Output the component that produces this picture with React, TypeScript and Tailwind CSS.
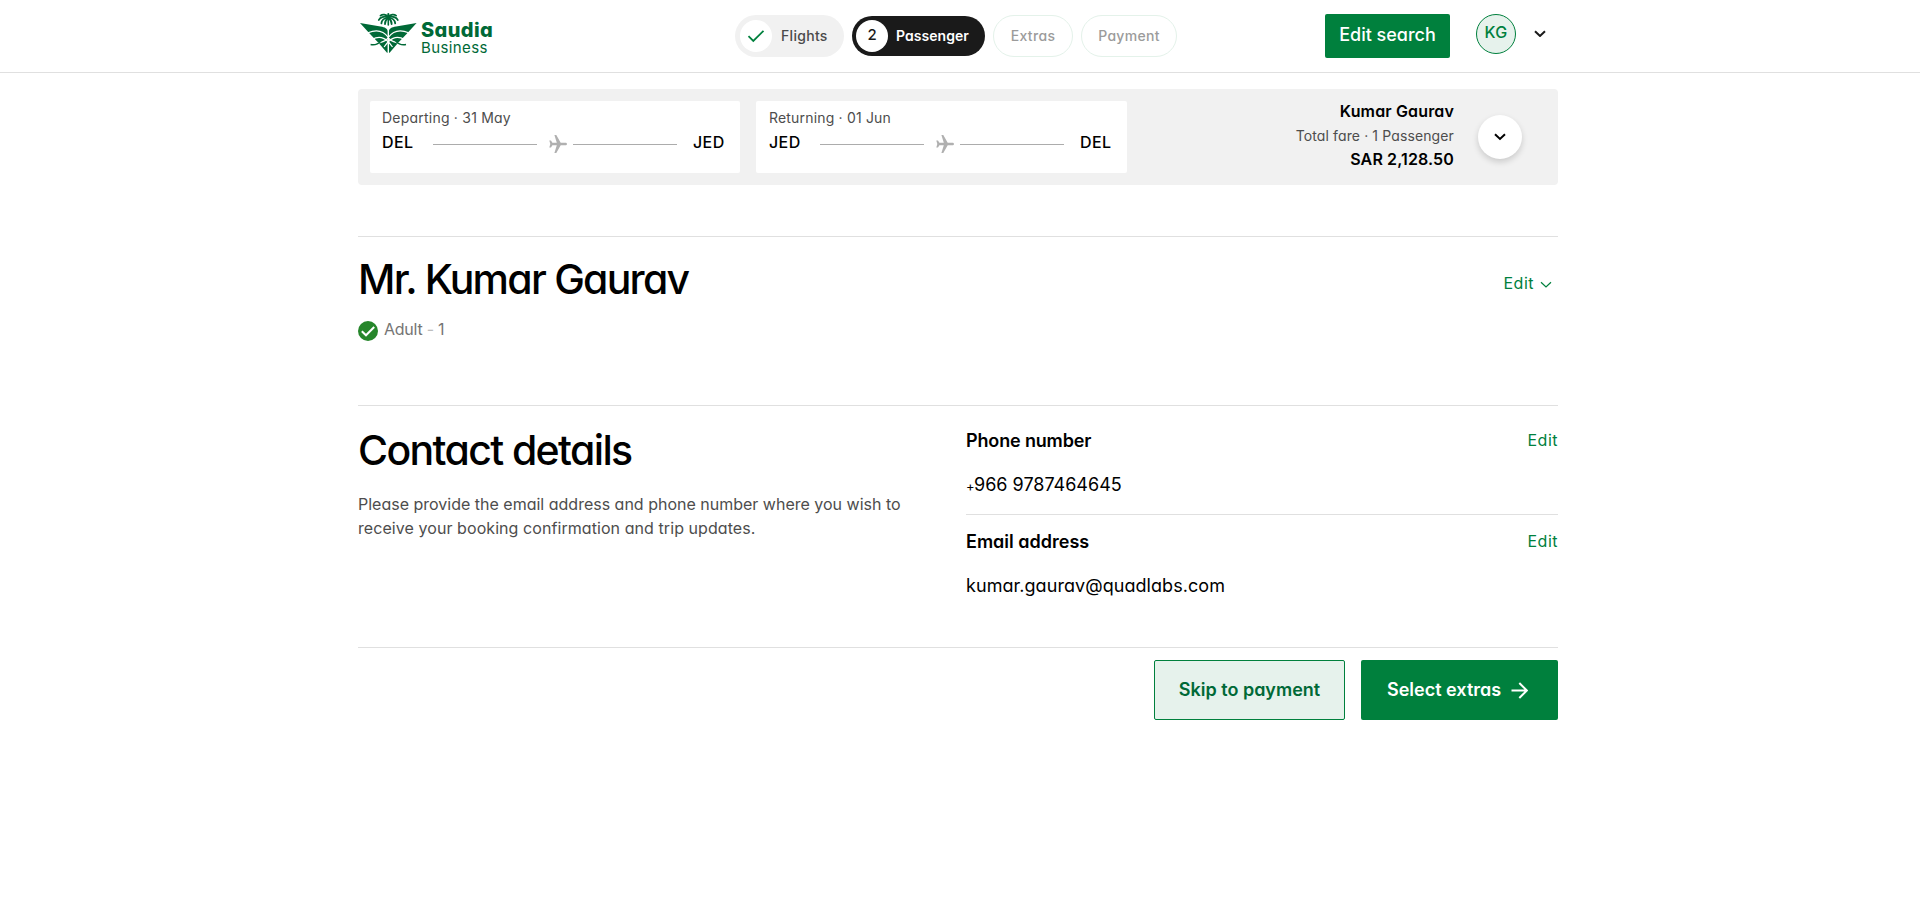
import React from "react";

function LogoMark() {
  return (
    <svg width="58" height="42" viewBox="0 0 58 42" className="block">
      <g stroke="#006937" strokeWidth="1.8" fill="none" strokeLinecap="round">
        <path d="M28.3 3.5V12" strokeWidth="1.6" />
        <path d="M28.3 4C26 1.2 22.5 1 20.5 2.6" />
        <path d="M28.3 4C30.6 1.2 34.1 1 36.1 2.6" />
        <path d="M28.3 4.2C24 2.8 20 4.2 18.8 7" />
        <path d="M28.3 4.2C32.6 2.8 36.6 4.2 37.8 7" />
        <path d="M28 4.6C24.4 5 21.6 7.4 21.4 10.4" />
        <path d="M28.6 4.6C32.2 5 35 7.4 35.2 10.4" />
        <path d="M28 5C26 6.6 24.8 9 25 11.2" />
        <path d="M28.6 5C30.6 6.6 31.8 9 31.6 11.2" />
        <path d="M28.3 1V3" strokeWidth="2" />
      </g>
      <g fill="#006937">
        <path d="M0 10L20.5 13.4C25 14.2 27.6 15.4 27.6 18V39.7H27L18.4 29.8L10.5 21.5Z" />
        <path d="M56.600 10L36.100 13.4C31.600 14.2 29 15.4 29 18V39.7H29.600L38.200 29.8L46.100 21.5Z" />
      </g>
      <g stroke="#fff" strokeWidth="1.2" fill="none">
        <path d="M8 19.800C16 16.400 23.500 17.800 28.300 24.500" />
        <path d="M48.600 19.800C40.600 16.400 33.100 17.800 28.300 24.500" />
        <path d="M12 26.500C21 21.500 27 26 32.500 34" />
        <path d="M44.600 26.500C35.600 21.500 29.600 26 24.100 34" />
        <path d="M14.500 29.800C20 30.200 25 28.500 28.300 25" />
        <path d="M42.100 29.800C36.600 30.200 31.600 28.500 28.300 25" />
      </g>
      <g stroke="#006937" strokeWidth="1.500" fill="none">
        <path d="M10.600 31.600C14.500 32.400 18.500 30.800 21 28" />
        <path d="M46 31.600C42.100 32.400 38.100 30.800 35.600 28" />
      </g>
    </svg>
  );
}

function Chevron({ color, size, stroke }: { color: string; size: number; stroke: number }) {
  return (
    <svg width={size} height={size * 0.6} viewBox="0 0 12 7.2" fill="none" className="block">
      <path d="M1 1.200L6 6L11 1.200" stroke={color} strokeWidth={stroke} />
    </svg>
  );
}

function Plane() {
  return (
    <svg width="18" height="18" viewBox="0 0 18 18" className="mr-1.5 ml-3 block">
      <path
        d="M18 9C18 8.100 17.200 7.700 16.300 7.700H11.700L7.300 0H5.400L7.800 7.700H3.400L2 5.500H0.300L1.300 9L0.300 12.500H2L3.400 10.300H7.800L5.400 18H7.300L11.700 10.300H16.300C17.200 10.300 18 9.900 18 9Z"
        fill="#b0b0b0"
      />
    </svg>
  );
}

function FlightCard({ label, labelClass, from, to, boxClass }: { label: string; labelClass: string; from: string; to: string; boxClass: string }) {
  return (
    <div className={"h-[72px] rounded-[2px] bg-white pt-[7px] " + boxClass}>
      <div className={"text-[14px] leading-5 text-[#4d4d4d] " + labelClass}>{label}</div>
      <div className="mt-0.5 flex h-6 text-[16px] leading-6 font-medium tracking-[0.4px]">
        <span className="w-[51px]">{from}</span>
        <div className="flex items-center pt-1">
          <div className="h-px w-[104px] bg-[#acacac]" />
          <Plane />
          <div className="h-px w-[104px] bg-[#acacac]" />
        </div>
        <span className="ml-4">{to}</span>
      </div>
    </div>
  );
}

function Header() {
  return (
    <header className="h-[73px] border-b border-[#e0e0e0]">
      <div className="ml-[358px] flex w-[1200px] items-start">
        <div className="flex w-[377px] pt-[13px] pl-0.5">
          <LogoMark />
          <div className="ml-[3px] flex flex-col pt-[7px] text-[#006937]">
            <span className="text-[20px] leading-[21px] font-extrabold tracking-[0.4px]">Saudia</span>
            <span className="text-[15px] leading-[14px] tracking-[0.4px]">Business</span>
          </div>
        </div>
        <nav className="flex items-center gap-2 pt-[15px] text-[14px] font-medium">
          <div className="flex h-[42px] w-[109px] items-center rounded-full bg-[#f1f1f1] pl-[5px] text-[#4a4a4a]">
            <div className="flex size-8 items-center justify-center rounded-full bg-white">
              <svg width="18" height="14" viewBox="0 0 18 14" fill="none">
                <path d="M1.500 7.200L6.300 12L16.500 1.800" stroke="#00803d" strokeWidth="1.800" />
              </svg>
            </div>
            <span className="ml-[9px] pb-0.5 tracking-[0.3px]">Flights</span>
          </div>
          <div className="flex h-10 w-[133px] items-center rounded-full bg-[#1a1a1a] pl-1 text-white">
            <div className="flex size-8 items-center justify-center rounded-full bg-white pb-0.5 text-[15px] text-[#1a1a1a]">2</div>
            <span className="ml-2 pb-0.5 font-semibold tracking-[0.05px]">Passenger</span>
          </div>
          <div className="flex h-[42px] w-20 items-center justify-center rounded-full border border-[#e4f2ea] pb-0.5 text-[#9b9b9b]">
            <span className="tracking-[0.35px]">Extras</span>
          </div>
          <div className="flex h-[42px] w-24 items-center justify-center rounded-full border border-[#e4f2ea] pb-0.5 text-[#9b9b9b]">
            <span className="tracking-[0.3px]">Payment</span>
          </div>
        </nav>
        <button className="mt-3.5 ml-[148px] h-11 w-[125px] rounded-[2px] bg-[#00803d] pb-[3px] text-[18px] font-[550] text-white">
          Edit search
        </button>
        <div className="mt-3.5 ml-[26px] flex size-10 items-center justify-center rounded-full border border-[#00803d] bg-[#e6f2ec] pb-[5px] text-[16px] font-medium tracking-[0.3px] text-[#00803d]">
          KG
        </div>
        <div className="mt-[30px] ml-[18px]">
          <Chevron color="#1a1a1a" size={12} stroke={2} />
        </div>
      </div>
    </header>
  );
}

function TripSummary() {
  return (
    <section className="mt-4 flex h-24 rounded bg-[#f1f1f1] pt-3 pl-3">
      <FlightCard label="Departing · 31 May" labelClass="tracking-[0.22px]" from="DEL" to="JED" boxClass="w-[370px] pl-3" />
      <FlightCard label="Returning · 01 Jun" labelClass="tracking-[0.18px]" from="JED" to="DEL" boxClass="ml-4 w-[371px] pl-[13px]" />
      <div className="ml-auto flex flex-col items-end text-[16px] leading-6 font-semibold">
        <span className="-mt-0.5 pb-px tracking-[0.15px]">Kumar Gaurav</span>
        <span className="text-[14px] leading-6 font-normal tracking-[0.12px] text-[#4d4d4d]">Total fare · 1 Passenger</span>
        <span className="-mt-px tracking-[0.13px]">SAR 2,128.50</span>
      </div>
      <button className="mt-3.5 mr-9 ml-6 flex size-11 items-center justify-center rounded-full bg-white shadow-[0_3px_6px_rgba(0,0,0,0.16)]">
        <Chevron color="#000" size={12} stroke={2} />
      </button>
    </section>
  );
}

function PassengerSection() {
  return (
    <section className="mt-[51px] flex h-[169px] justify-between border-t border-[#e0e0e0]">
      <div className="pt-[18px]">
        <h1 className="text-[41px] leading-[48px] font-[550] tracking-[-1.75px]">Mr. Kumar Gaurav</h1>
        <div className="mt-3.5 flex text-[16px] leading-6 text-[#757575]">
          <svg width="20" height="20" viewBox="0 0 20 20" fill="none" className="mt-1 mr-1.5">
            <circle cx="10" cy="10" r="10" fill="#26862b" />
            <path d="M3.800 10.200L8 14.300L16.200 6" stroke="#fff" strokeWidth="2" />
          </svg>
          <span className="tracking-[-0.25px]">
            Adult <span className="text-[#bdbdbd]">-</span> 1
          </span>
        </div>
      </div>
      <button className="mt-[34px] mr-1.5 flex h-6 items-center gap-1.5 text-[16px] leading-6 text-[#00803d]">
        <span className="tracking-[0.5px]">Edit</span>
        <span className="pt-1">
          <Chevron color="#00803d" size={12} stroke={1.2} />
        </span>
      </button>
    </section>
  );
}

function Field({ label, value }: { label: React.ReactNode; value: React.ReactNode }) {
  return (
    <>
      <div className="flex items-start justify-between leading-6">
        <span className="pt-px text-[18px] font-semibold">{label}</span>
        <button className="text-[16px] tracking-[0.5px] text-[#00803d]">Edit</button>
      </div>
      <div className="mt-5 h-6 text-[18px] leading-6">{value}</div>
    </>
  );
}

function ContactSection() {
  return (
    <section className="flex h-[242px] border-t border-[#e0e0e0]">
      <div className="w-[608px] pt-5">
        <h2 className="text-[41px] leading-[48px] font-[550] tracking-[-1.63px]">Contact details</h2>
        <p className="mt-[18px] text-[16px] leading-6 whitespace-nowrap text-[#4d4d4d]">
          Please provide the email address and phone number where you wish to
          <br />
          <span className="tracking-[0.07px]">receive your booking confirmation and trip updates.</span>
        </p>
      </div>
      <div className="flex-1">
        <div className="h-[109px] border-b border-[#e0e0e0] pt-[22px]">
          <Field
            label={<span className="block tracking-[-0.15px]">Phone number</span>}
            value={
              <>
                <span className="text-[13px] tracking-[-0.6px]">+</span>966 9787464645
              </>
            }
          />
        </div>
        <div className="pt-3.5">
          <Field
            label={<span className="block">Email address</span>}
            value={<span className="tracking-[0.06px]">kumar.gaurav@quadlabs.com</span>}
          />
        </div>
      </div>
    </section>
  );
}

export default function App() {
  return (
    <div className="min-h-screen bg-white font-['Inter',sans-serif] text-black [font-feature-settings:'cv11']">
      <Header />
      <main className="ml-[358px] w-[1200px]">
        <TripSummary />
        <PassengerSection />
        <ContactSection />
        <footer className="flex justify-end gap-4 border-t border-[#e0e0e0] pt-3 text-[18px] font-semibold">
          <button className="h-[60px] w-[191px] rounded-[2px] border border-[#00803d] bg-[#e6f2ec] pb-0.5 text-[#006937]">
            Skip to payment
          </button>
          <button className="flex h-[60px] w-[197px] items-center rounded-[2px] bg-[#00803d] pl-[26px] text-white">
            <span className="pb-0.5">Select extras</span>
            <svg width="17" height="17" viewBox="0 0 17 17" fill="none" className="ml-2.5">
              <path d="M0.500 8.500H15.500M8.300 1L15.800 8.500L8.300 16" stroke="#fff" strokeWidth="2" />
            </svg>
          </button>
        </footer>
      </main>
    </div>
  );
}
